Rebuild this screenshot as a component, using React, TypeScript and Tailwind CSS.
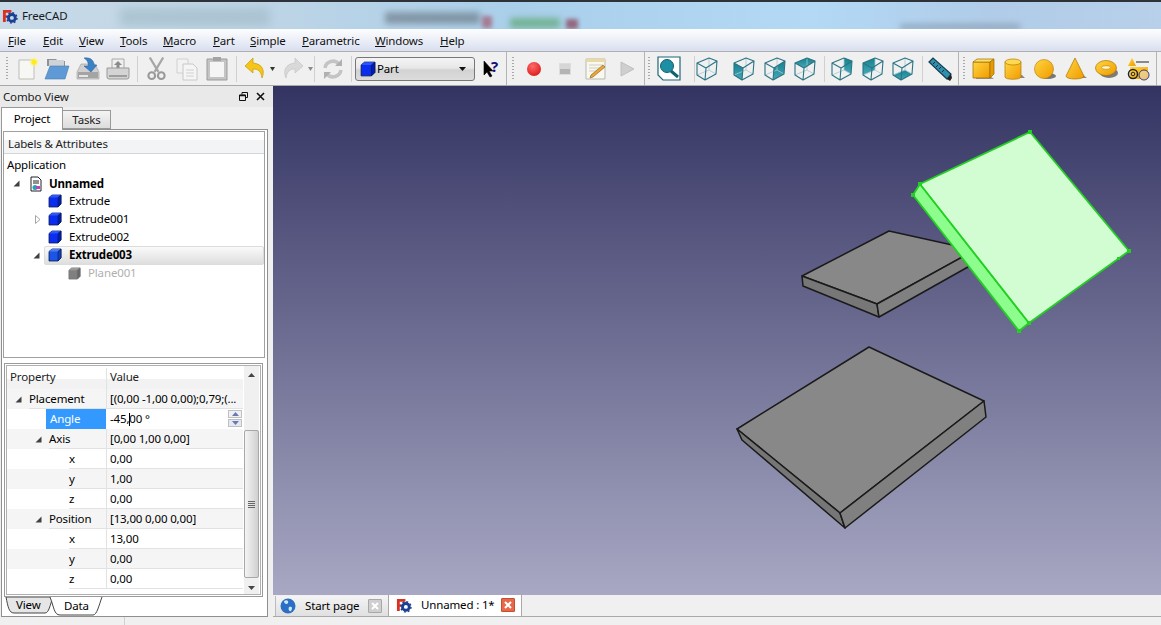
import type { ReactNode } from 'react'
import clsx from 'clsx'

const FONT = "font-['Noto_Sans',sans-serif] text-[11.5px] tracking-[-0.15px] whitespace-nowrap"

function Logo() {
  return (
    <svg width="16" height="16" viewBox="0 0 17 17" className="shrink-0">
      <path d="M1 2h9v3H4v3h3v2H4v5H1z" fill="#d9301f" />
      <circle cx="10.5" cy="10.5" r="3.6" fill="none" stroke="#1c3f94" strokeWidth="3" />
      <circle cx="10.5" cy="10.5" r="5.4" fill="none" stroke="#1c3f94" strokeWidth="1.6" strokeDasharray="2 2.2" />
    </svg>
  )
}

function Cube({ size = 14, front = '#0a2df0', top = '#2a55ff', side = '#001fb0', line = '#0a1a50' }) {
  return (
    <svg width={size} height={size} viewBox="0 0 14 14" className="shrink-0">
      <path d="M1 3.5 4 1h9v9l-3 3H1z" fill={front} stroke={line} strokeWidth="0.8" />
      <path d="M1 3.5 4 1h9l-3 2.5z" fill={top} />
      <path d="M10 3.5 13 1v9l-3 3z" fill={side} stroke={line} strokeWidth="0.6" />
    </svg>
  )
}

function ViewCube({ face }: { face?: string }) {
  return (
    <svg width="22" height="24" viewBox="0 0 22 24">
      <defs>
        <linearGradient id="teal" x1="0" y1="0" x2="0" y2="1">
          <stop offset="0" stopColor="#17808f" />
          <stop offset="1" stopColor="#44a8b8" />
        </linearGradient>
      </defs>
      {face && <polygon points={face} fill="url(#teal)" />}
      <g fill="none" stroke="#a4c8ce" strokeWidth="0.8">
        <path d="M13 1v12M1 18l12-5 7 4" />
      </g>
      <g fill="none" stroke="#2a7484" strokeWidth="1.1" strokeLinejoin="round">
        <path d="M1 6 13 1l8 3-1 13-11 6-8-5zM1 6l9 5 11-7M10 11 9 23" />
      </g>
    </svg>
  )
}

function Solid({ children }: { children: ReactNode }) {
  return (
    <svg width="24" height="24" viewBox="0 0 24 24">
      <defs>
        <linearGradient id="gold" x1="0" y1="0" x2="1" y2="1">
          <stop offset="0" stopColor="#ffd640" />
          <stop offset="1" stopColor="#f09a00" />
        </linearGradient>
      </defs>
      {children}
    </svg>
  )
}

function Slot({ children, narrow, className }: { children?: ReactNode; narrow?: boolean; className?: string }) {
  return (
    <div className={clsx('flex h-6 shrink-0 items-center justify-center', narrow ? 'w-[22px]' : 'w-[30px]', className)}>
      {children}
    </div>
  )
}

function Sep({ className }: { className: string }) {
  return <div className={clsx('h-[26px] w-px shrink-0 bg-[#d0d0d0]', className)} />
}

function Bound({ className }: { className: string }) {
  return <div className={clsx('h-full w-px shrink-0 bg-[#b4b4b4]', className)} />
}

function Grip({ className }: { className: string }) {
  return (
    <div className={clsx('h-[24px] w-[2px] shrink-0 bg-[repeating-linear-gradient(180deg,#a8a8a8_0,#a8a8a8_1px,transparent_1px,transparent_3px)]', className)} />
  )
}

function DropArrow({ color }: { color: string }) {
  return (
    <svg width="5" height="4" viewBox="0 0 5 4" className="shrink-0">
      <path d="M0 0h5L2.5 4z" fill={color} />
    </svg>
  )
}

function Toolbar() {
  return (
    <div className="flex h-[34px] items-center border-b border-[#a9a9a9] bg-[#f0f0f0]">
      <Grip className="ml-[6px]" />
      <Slot className="ml-[4px]">
        <svg width="24" height="24" viewBox="0 0 24 24">
          <path d="M4 3h15v19H4z" fill="#f7f7f4" stroke="#bdbdb8" />
          <circle cx="19" cy="5" r="4.5" fill="#fff27a" opacity=".55" />
          <circle cx="19" cy="5" r="2.6" fill="#ffe91f" />
        </svg>
      </Slot>
      <Slot>
        <svg width="26" height="24" viewBox="0 0 26 24">
          <path d="M3 2h9l2 2h7v5H3z" fill="#8d9299" />
          <path d="M5 3h15v6H5z" fill="#cfd3d8" />
          <path d="M6 9h19l-4 13H1z" fill="#5f9ad6" stroke="#4a7cae" strokeWidth=".6" />
        </svg>
      </Slot>
      <Slot className="ml-px">
        <svg width="24" height="24" viewBox="0 0 24 24">
          <path d="M1 15 5 7h14l4 8v7H1z" fill="#cfcfcf" stroke="#9a9a9a" strokeWidth=".6" />
          <path d="M2 15h20v6H2z" fill="#a4a4a4" />
          <path d="M3 18h9v2H3z" fill="#e6e6e6" />
          <path d="M8 1c7-1 10 3 10 7h3l-6 7-7-6h4c1-3-1-6-4-8z" fill="#3a82c8" stroke="#2a5f98" strokeWidth=".5" />
        </svg>
      </Slot>
      <Slot>
        <svg width="24" height="22" viewBox="0 0 24 22">
          <path d="M6 1h12v10H6z" fill="#efefef" stroke="#aaa" />
          <path d="M12 3l4 4h-2.500v3h-3V7H8z" fill="#8a8a8a" />
          <path d="M1 10h22v9a2 2 0 0 1-2 2H3a2 2 0 0 1-2-2z" fill="#d4d4d4" stroke="#999" />
          <path d="M3 17h18v2H3z" fill="#9e9e9e" />
        </svg>
      </Slot>
      <Sep className="ml-[4px]" />
      <Slot className="ml-[3px]">
        <svg width="21" height="25" viewBox="0 0 22 25" fill="none" stroke="#a6a6a6">
          <path d="M4 1l9 15M18 1L9 16" strokeWidth="2.400" />
          <circle cx="6" cy="20" r="3.500" stroke="#999" strokeWidth="2.200" />
          <circle cx="16" cy="20" r="3.500" stroke="#999" strokeWidth="2.200" />
        </svg>
      </Slot>
      <Slot className="ml-px">
        <svg width="24" height="24" viewBox="0 0 24 24">
          <path d="M2 2h11v14H2z" fill="#f2f2f2" stroke="#d0d0d0" />
          <path d="M8 7h10l4 4v12H8z" fill="#f5f5f5" stroke="#c8c8c8" />
          <path d="M11 13h8M11 16h8M11 19h8" stroke="#d0d0d0" />
        </svg>
      </Slot>
      <Slot>
        <svg width="22" height="25" viewBox="0 0 22 25">
          <path d="M1 3h20v21H1z" fill="#c4c4c4" stroke="#9c9c9c" />
          <path d="M4 6h14v15H4z" fill="#f5f5f5" />
          <path d="M7 1h8v4H7z" fill="#a4a4a4" />
        </svg>
      </Slot>
      <Sep className="ml-[4px]" />
      <Slot className="ml-[3px]">
        <svg width="22" height="24" viewBox="0 0 22 24">
          <path d="M9 1 1 9l8 7v-4c5 0 8 2 9 9 3-7 1-14-9-15z" fill="#f5c518" stroke="#c99a0a" strokeWidth=".7" />
        </svg>
      </Slot>
      <div className="flex w-[5px] shrink-0 justify-center">
        <DropArrow color="#333" />
      </div>
      <Slot className="ml-[3px]">
        <svg width="22" height="24" viewBox="0 0 22 24">
          <path d="M13 1l8 8-8 7v-4c-5 0-8 2-9 9-3-7-1-14 9-15z" fill="#d9d9d9" stroke="#c4c4c4" strokeWidth=".7" />
        </svg>
      </Slot>
      <div className="flex w-[5px] shrink-0 justify-center">
        <DropArrow color="#8a8a8a" />
      </div>
      <Sep className="ml-px" />
      <Slot className="ml-[3px]">
        <svg width="22" height="22" viewBox="0 0 22 22" fill="none" stroke="#c4c4c4" strokeWidth="3.500">
          <path d="M3 10a8 8 0 0 1 14-4" />
          <path d="M19 12a8 8 0 0 1-14 4" />
          <path d="M20 1v7h-7zM2 21v-7h7z" fill="#b0b0b0" stroke="none" />
        </svg>
      </Slot>
      <Sep className="ml-[3px]" />
      <div className="ml-[3px] flex h-[24px] w-[120px] shrink-0 items-center rounded-[3px] border border-[#777] bg-[linear-gradient(180deg,#f4f4f4_0,#e8e8e8_45%,#d2d2d2_55%,#dcdcdc_100%)] pl-1 text-black">
        <Cube size={16} />
        <span className="ml-px">Part</span>
        <span className="ml-auto mr-[8px] flex">
          <svg width="7" height="4" viewBox="0 0 7 4">
            <path d="M0 0h7L3.500 4z" fill="#111" />
          </svg>
        </span>
      </div>
      <Slot className="relative ml-px">
        <svg width="12" height="18" viewBox="0 0 12 18" className="absolute left-[7px] top-[3px]">
          <path d="M1 1v14l3-3 3 5 2-1-3-5h4z" fill="#000" stroke="#000" strokeWidth=".6" />
        </svg>
        <span className="absolute left-[15px] top-[-2px] text-[15px] font-bold text-[#10107a]">?</span>
      </Slot>
      <Bound className="ml-0" />
      <Grip className="ml-[5px]" />
      <Slot className="ml-[5px]">
        <svg width="16" height="16" viewBox="0 0 16 16">
          <defs>
            <radialGradient id="rec" cx=".4" cy=".3" r=".8">
              <stop offset="0" stopColor="#ff6a6a" />
              <stop offset="1" stopColor="#d81414" />
            </radialGradient>
          </defs>
          <circle cx="8" cy="8" r="7" fill="url(#rec)" />
        </svg>
      </Slot>
      <Slot className="ml-px">
        <div className="h-[12px] w-[12px] border border-[#ddd] bg-[linear-gradient(180deg,#d6d6d6_50%,#b4b4b4_50%)]" />
      </Slot>
      <Slot className="ml-px">
        <svg width="24" height="24" viewBox="0 0 24 24">
          <path d="M2 2h19v20H2z" fill="#f8f7f0" stroke="#b8b8b0" />
          <path d="M2 2h19v3H2z" fill="#ead9a0" />
          <path d="M5 8h14M5 11h14M5 14h9" stroke="#cfcfc4" />
          <path d="M7 18 19 8l2 2-12 10-3 1z" fill="#e8a838" stroke="#8a5a10" strokeWidth=".6" />
        </svg>
      </Slot>
      <Slot className="ml-px">
        <svg width="15" height="16" viewBox="0 0 15 16">
          <path d="M1 1l13 7-13 7z" fill="#cfcfcf" stroke="#c0c0c0" />
        </svg>
      </Slot>
      <Bound className="ml-[2px]" />
      <Grip className="ml-[3px]" />
      <Slot className="ml-[4px]">
        <svg width="24" height="25" viewBox="0 0 24 25">
          <path d="M1 1h22v23H6l-5-5z" fill="#fff" stroke="#1f6676" strokeWidth="1.200" />
          <circle cx="10" cy="10" r="6.500" fill="#1d8fa5" stroke="#13606f" />
          <path d="m14 15 7 6" stroke="#13606f" strokeWidth="3" />
        </svg>
      </Slot>
      <Sep className="ml-[10px]" />
      <Slot narrow className="ml-px"><ViewCube /></Slot>
      <Slot narrow className="ml-[15px]"><ViewCube face="1,6 10,11 9,23 1,18" /></Slot>
      <Slot narrow className="ml-[9px]"><ViewCube face="10,11 21,4 20,17 9,23" /></Slot>
      <Slot narrow className="ml-[8px]"><ViewCube face="1,6 13,1 21,4 10,11" /></Slot>
      <Sep className="ml-[8px]" />
      <Slot narrow className="ml-[6px]"><ViewCube face="13,1 21,4 20,17 13,13" /></Slot>
      <Slot narrow className="ml-[9px]"><ViewCube face="1,6 13,1 13,13 1,18" /></Slot>
      <Slot narrow className="ml-[8px]"><ViewCube face="1,18 13,13 20,17 9,23" /></Slot>
      <Sep className="ml-[8px]" />
      <Slot className="ml-[2px]">
        <svg width="24" height="24" viewBox="0 0 24 24">
          <path d="M1 5 5 1l18 16-4 5z" fill="#2f8fb0" stroke="#173f4c" strokeWidth="1.200" />
          <path d="M5 7l2-2M8 10l2-2M11 12l2-2M14 15l2-2" stroke="#0d2a34" />
          <path d="M19 22l4-5 1 4-2 3z" fill="#222" />
        </svg>
      </Slot>
      <Bound className="ml-[3px]" />
      <Grip className="ml-[4px]" />
      <Slot className="ml-[3px]">
        <Solid>
          <path d="M5 22h18l-4-3H5z" fill="#999" />
          <path d="M2 5h17v16H2z" fill="url(#gold)" stroke="#9a6a00" strokeWidth=".7" />
          <path d="M2 5l4-3h17l-4 3z" fill="#ffdf66" stroke="#9a6a00" strokeWidth=".7" />
          <path d="M19 5l4-3v15l-4 4z" fill="#e89a00" stroke="#9a6a00" strokeWidth=".7" />
        </Solid>
      </Slot>
      <Slot className="ml-px">
        <Solid>
          <path d="M10 21h13l-3-3H10z" fill="#888" />
          <path d="M3 5v15c0 3 16 3 16 0V5z" fill="url(#gold)" stroke="#b07a00" strokeWidth=".7" />
          <ellipse cx="11" cy="5" rx="8" ry="3" fill="#ffd94f" stroke="#b07a00" strokeWidth=".7" />
        </Solid>
      </Slot>
      <Slot className="ml-px">
        <Solid>
          <ellipse cx="15" cy="19" rx="8" ry="3" fill="#777" />
          <circle cx="11" cy="12" r="9.500" fill="url(#gold)" stroke="#b07a00" strokeWidth=".6" />
        </Solid>
      </Slot>
      <Slot className="ml-px">
        <Solid>
          <path d="M14 21h9l-4-3h-5z" fill="#888" />
          <path d="M11 1 2 19c0 4 18 4 18 0z" fill="url(#gold)" stroke="#a87400" strokeWidth=".7" />
        </Solid>
      </Slot>
      <Slot className="ml-px">
        <Solid>
          <ellipse cx="14" cy="16" rx="9" ry="5" fill="#7a7a7a" />
          <ellipse cx="11" cy="11" rx="10.500" ry="7.500" fill="url(#gold)" stroke="#a87400" strokeWidth=".7" />
          <ellipse cx="11" cy="10.500" rx="4.500" ry="1.800" fill="#fff3c4" stroke="#a87400" strokeWidth=".5" />
        </Solid>
      </Slot>
      <Slot className="ml-[2px]">
        <Solid>
          <path d="M5 1 1 9h8z" fill="url(#gold)" />
          <path d="M9 5h13" stroke="#222" />
          <path d="M3 10h18v12H3z" fill="url(#gold)" />
          <circle cx="6" cy="17" r="4.500" fill="none" stroke="#222" strokeWidth="1.500" />
          <circle cx="6" cy="17" r="1.800" fill="none" stroke="#222" />
          <circle cx="17" cy="18" r="5" fill="#e8e8f0" fillOpacity=".5" stroke="#3a3a70" />
        </Solid>
      </Slot>
      <Bound className="ml-[2px]" />
    </div>
  )
}

const MENU = [
  { first: 'F', rest: 'ile', w: 'w-[35px]' },
  { first: 'E', rest: 'dit', w: 'w-[36px]' },
  { first: 'V', rest: 'iew', w: 'w-[41px]' },
  { first: 'T', rest: 'ools', w: 'w-[43px]' },
  { first: 'M', rest: 'acro', w: 'w-[50px]' },
  { first: 'P', rest: 'art', w: 'w-[37px]' },
  { first: 'S', rest: 'imple', w: 'w-[52px]' },
  { first: 'P', rest: 'arametric', w: 'w-[73px]' },
  { first: 'W', rest: 'indows', w: 'w-[65px]' },
  { first: 'H', rest: 'elp', w: 'w-[40px]' },
]

function Caret({ open }: { open: boolean }) {
  return open ? (
    <svg width="7" height="7" viewBox="0 0 7 7" className="shrink-0">
      <path d="M6.500 0.500v6h-6z" fill="#404040" />
    </svg>
  ) : (
    <svg width="6" height="9" viewBox="0 0 6 9" className="shrink-0">
      <path d="M.5.500 5 4.500.5 8.500z" fill="#fff" stroke="#a6a6a6" />
    </svg>
  )
}

function TreeRow({ label, caret }: { label: string; caret?: ReactNode }) {
  return (
    <div className="flex h-[18px] items-center">
      <span className="ml-[28px] flex w-[13px]">{caret}</span>
      <Cube />
      <span className="ml-[7px]">{label}</span>
    </div>
  )
}

function Tree() {
  return (
    <div className="h-[227px] w-[262px] shrink-0 border border-[#a0a0a0] bg-white">
      <div className="flex h-[22px] items-center border-b border-[#d5d5d5] bg-[linear-gradient(180deg,#ffffff_40%,#f2f4f6_40%)] pl-[4px] pt-[3px] text-[#222]">
        Labels &amp; Attributes
      </div>
      <div className="pl-[3px] pt-[2px] leading-[18px] text-black">
        <div className="h-[18px]">Application</div>
        <div className="flex h-[18px] items-center pt-px">
          <span className="ml-[6px] flex w-[17px]"><Caret open /></span>
          <svg width="12" height="16" viewBox="0 0 12 16" className="shrink-0">
            <path d="M1 1h7l3 3v11H1z" fill="#fff" stroke="#222" />
            <path d="M3 5h6M3 7h6" stroke="#222" />
            <circle cx="5" cy="11.500" r="2.500" fill="#28a0b8" />
            <rect x="6" y="10" width="4" height="3" fill="#c040c0" />
          </svg>
          <span className="ml-[7px] font-bold">Unnamed</span>
        </div>
        <TreeRow label="Extrude" />
        <TreeRow label="Extrude001" caret={<Caret open={false} />} />
        <TreeRow label="Extrude002" />
        <div className="flex h-[18px] items-center">
          <span className="ml-[26px] flex w-[10px]"><Caret open /></span>
          <div className="ml-px flex h-[19px] w-[223px] items-center rounded-[2px] border border-[#dcdcdc] bg-[linear-gradient(180deg,#fafafa,#dedede)] pl-[3px]">
            <Cube front="#1a55e8" top="#4a7cf5" side="#1040c0" />
            <span className="ml-[7px] font-bold">Extrude003</span>
          </div>
        </div>
        <div className="flex h-[18px] items-center pl-[61px]">
          <Cube size={13} front="#808080" top="#9a9a9a" side="#666" line="#707070" />
          <span className="ml-[7px] text-[#b0b0b0]">Plane001</span>
        </div>
      </div>
    </div>
  )
}

const ROWS: { label: string; value: string; indent: 'a' | 'b' | 'c'; caret?: boolean; grey?: boolean }[] = [
  { label: 'Placement', value: '[(0,00 -1,00 0,00);0,79;(...', indent: 'a', caret: true, grey: true },
  { label: 'Axis', value: '[0,00 1,00 0,00]', indent: 'b', caret: true, grey: true },
  { label: 'x', value: '0,00', indent: 'c' },
  { label: 'y', value: '1,00', indent: 'c', grey: true },
  { label: 'z', value: '0,00', indent: 'c' },
  { label: 'Position', value: '[13,00 0,00 0,00]', indent: 'b', caret: true, grey: true },
  { label: 'x', value: '13,00', indent: 'c' },
  { label: 'y', value: '0,00', indent: 'c', grey: true },
  { label: 'z', value: '0,00', indent: 'c' },
]

function PropRow({ label, value, indent, caret, grey }: (typeof ROWS)[number]) {
  return (
    <div className={clsx('flex h-5 text-black', grey ? 'bg-[#f5f5f5]' : 'bg-white')}>
      <div className="flex w-[99px] shrink-0 items-center">
        <span className={clsx('flex shrink-0 justify-start', indent === 'a' ? 'w-[22px] pl-[8px]' : indent === 'b' ? 'w-[42px] pl-[28px]' : 'w-[62px]')}>
          {caret && <Caret open />}
        </span>
        <span className="h-full flex-1 border-b border-[#e2e2e2] leading-[19px]">{label}</span>
      </div>
      <div className="h-full min-w-0 flex-1 overflow-hidden border-b border-l border-[#e2e2e2] pl-[3px] leading-[19px]">{value}</div>
    </div>
  )
}

function PropertyPanel() {
  return (
    <div className="ml-px mt-[5px] h-[234px] w-[259px] shrink-0 border border-[#9a9a9a] p-px">
      <div className="flex h-[230px] border border-[#b0b0b0] bg-white">
        <div className="w-[236px] shrink-0">
          <div className="flex h-[23px] pt-[2px] text-[#222]">
            <div className="w-[99px] bg-[linear-gradient(180deg,#fff_50%,#f2f2f2_50%)] pl-[3px]">Property</div>
            <div className="flex-1 border-l border-[#e2e2e2] bg-[linear-gradient(180deg,#fff_50%,#f2f2f2_50%)] pl-[3px]">Value</div>
          </div>
          <PropRow {...ROWS[0]} />
          <div className="flex h-5 bg-white">
            <div className="ml-[39px] w-[60px] bg-[#3399ff] pl-[4px] leading-[19px] text-white">Angle</div>
            <div className="relative flex-1 pl-[4px] leading-[19px] text-black">
              -45,<span className="-mr-px inline-block h-[13px] w-px bg-black align-middle" />00 °
              <div className="absolute right-[1px] top-[1px] flex w-[14px] flex-col gap-px">
                <span className="flex h-[8px] items-center justify-center border border-[#c0c0c0] bg-[#eef0f6]">
                  <svg width="7" height="4" viewBox="0 0 7 4"><path d="M3.500 0 7 4H0z" fill="#6a7ab0" /></svg>
                </span>
                <span className="flex h-[8px] items-center justify-center border border-[#c0c0c0] bg-[#e4e8f2]">
                  <svg width="7" height="4" viewBox="0 0 7 4"><path d="M0 0h7L3.500 4z" fill="#6a7ab0" /></svg>
                </span>
              </div>
            </div>
          </div>
          {ROWS.slice(1).map((row, i) => (
            <PropRow key={i} {...row} />
          ))}
        </div>
        <div className="ml-px flex w-[15px] shrink-0 flex-col items-center bg-[#f0f0f0]">
          <svg width="7" height="4" viewBox="0 0 7 4" className="mt-[7px] shrink-0"><path d="M3.500 0 7 4H0z" fill="#444" /></svg>
          <div className="mt-[53px] flex h-[148px] w-[15px] shrink-0 items-center justify-center rounded-[2px] border border-[#a8a8a8] bg-[linear-gradient(90deg,#f4f4f4,#d0d0d0)]">
            <div className="h-[7px] w-[7px] bg-[repeating-linear-gradient(180deg,#666_0,#666_1px,transparent_1px,transparent_2px)]" />
          </div>
          <svg width="7" height="4" viewBox="0 0 7 4" className="mt-[8px] shrink-0"><path d="M0 0h7L3.500 4z" fill="#444" /></svg>
        </div>
      </div>
    </div>
  )
}

function BottomTabs() {
  return (
    <div className="relative h-[20px] text-black">
      <svg width="110" height="20" viewBox="0 0 110 20" className="absolute left-0 top-0">
        <path d="M3 0c2 10 3 16 8 16h31c4 0 5-8 8-16z" fill="#e6e6e6" stroke="#444" strokeWidth="1" />
        <path d="M47 0c4 10 4 18 10 18h33c4 0 6-10 9-18" fill="#fff" stroke="#444" strokeWidth="1" />
      </svg>
      <span className="absolute left-[13px] top-[-1px]">View</span>
      <span className="absolute left-[61px] top-0">Data</span>
    </div>
  )
}

function Sidebar() {
  return (
    <aside className="flex w-[273px] shrink-0 flex-col bg-[#f0f0f0]">
      <div className="flex h-[21px] shrink-0 items-center justify-between bg-[#e9e9e9] pl-[3px] pr-[8px] text-[#222]">
        <span>Combo View</span>
        <span className="flex items-center gap-[8px]">
          <svg width="9" height="9" viewBox="0 0 9 9" fill="none" stroke="#111">
            <path d="M3 2.500V.500h5.500v5H6.500" />
            <path d="M.5 3h6v5.500h-6z" />
            <path d="M.5 3.500h6" strokeWidth="1.500" />
          </svg>
          <svg width="9" height="9" viewBox="0 0 9 9" stroke="#111" strokeWidth="1.600">
            <path d="m1 1 7 7M8 1 1 8" />
          </svg>
        </span>
      </div>
      <div className="flex h-[22px] shrink-0 items-end pl-px">
        <div className="relative z-10 -mb-px flex h-[23px] w-[62px] items-center justify-center border border-b-0 border-[#999] bg-white text-black">
          Project
        </div>
        <div className="flex h-[19px] w-[48px] items-center justify-center border border-l-0 border-[#999] bg-[linear-gradient(180deg,#f4f4f4,#dcdcdc)] pt-px text-[#222]">
          Tasks
        </div>
      </div>
      <div className="ml-px flex h-[488px] w-[267px] shrink-0 flex-col border border-[#8f8f8f] bg-white pl-px pr-px pt-px">
        <Tree />
        <PropertyPanel />
        <BottomTabs />
      </div>
      <div className="ml-[124px] min-h-0 w-px flex-1 bg-[#d0d0d0]" />
    </aside>
  )
}

function Scene() {
  return (
    <svg viewBox="273 86 888 509" className="absolute inset-0 h-full w-full">
      <g stroke="#1a1a1a" strokeWidth="1.500" strokeLinejoin="round">
        <path d="M889 231 802 276 877 304 975 250z" fill="#888888" />
        <path d="M802 276 803 286 879 317 877 304z" fill="#777777" />
        <path d="M877 304 879 317 975 263 975 250z" fill="#808080" />
        <path d="M869 347 737 429 840 513 984 401z" fill="#888888" />
        <path d="M737 429 742 440 845 528 840 513z" fill="#767676" />
        <path d="M840 513 845 528 986 417 984 401z" fill="#808080" />
      </g>
      <g stroke="#22d022" strokeWidth="1.800" strokeLinejoin="round">
        <path d="M920 184 913 195 1019 331 1029 323z" fill="#8dfd8d" />
        <path d="M1030 132 920 184 1029 323 1129 251z" fill="#d2fdd2" />
      </g>
      <g fill="#22d022">
        <rect x="1028" y="130" width="4" height="4" />
        <rect x="918" y="182" width="4" height="4" />
        <rect x="911" y="193" width="4" height="4" />
        <rect x="1127" y="249" width="4" height="4" />
        <rect x="1117" y="257" width="3" height="3" />
        <rect x="1027" y="321" width="4" height="4" />
        <rect x="1017" y="329" width="4" height="4" />
      </g>
    </svg>
  )
}

export default function App() {
  return (
    <div className={clsx('flex h-[625px] w-[1161px] flex-col overflow-hidden bg-[#f0f0f0]', FONT)}>
      <div className="relative flex h-[29px] shrink-0 items-center overflow-hidden border-t-2 border-[#2c3238] bg-[linear-gradient(90deg,#c8dae8_0,#bcd4e6_25%,#a9cfea_45%,#b3d9f5_70%,#b0cce8_85%,#b8d0ea_100%)] pl-[2px]">
        <div className="absolute left-[120px] top-[6px] h-[18px] w-[150px] bg-[#9fb8c4] opacity-60 blur-[5px]" />
        <div className="absolute left-[385px] top-[10px] h-[12px] w-[95px] bg-[#6f7f8c] opacity-70 blur-[3px]" />
        <div className="absolute left-[482px] top-[14px] h-[12px] w-[10px] bg-[#a05a70] opacity-70 blur-[2px]" />
        <div className="absolute left-[510px] top-[16px] h-[10px] w-[50px] bg-[#4fa05a] opacity-60 blur-[3px]" />
        <div className="absolute left-[566px] top-[17px] h-[10px] w-[12px] bg-[#8a3a50] opacity-70 blur-[2px]" />
        <div className="absolute left-[900px] top-[22px] h-[6px] w-[120px] bg-[#708090] opacity-50 blur-[3px]" />
        <div className="relative flex items-center">
          <Logo />
          <span className="ml-[4px] text-[#1a1a1a]">FreeCAD</span>
        </div>
      </div>
      <div className="flex h-[23px] shrink-0 items-center border-b border-[#b0b0b0] bg-[linear-gradient(180deg,#fdfdfe_0,#f3f5fa_30%,#d9dff0_100%)] pl-[8px] pt-px text-[#111]">
        {MENU.map((m) => (
          <div key={m.first + m.rest} className={clsx('shrink-0', m.w)}>
            <span className="underline">{m.first}</span>
            {m.rest}
          </div>
        ))}
      </div>
      <Toolbar />
      <div className="flex min-h-0 flex-1">
        <Sidebar />
        <main className="flex min-w-0 flex-1 flex-col">
          <div className="relative h-[509px] shrink-0 bg-[linear-gradient(180deg,#343463_0,#a8a8c4_100%)]">
            <Scene />
          </div>
          <div className="flex h-[22px] shrink-0 items-start border-b border-[#a9a9a9] pl-[2px] text-black">
            <div className="mt-px flex h-[20px] w-[113px] items-center border-l border-[#bbb] bg-[linear-gradient(180deg,#f4f4f4,#e0e0e0)] pl-[4px]">
              <svg width="16" height="16" viewBox="0 0 16 16" className="shrink-0">
                <circle cx="8" cy="8" r="7.500" fill="#2a6fc4" />
                <path d="M4 3c3-2 5 0 4 2S4 6 4 3zM9 9c3-1 4 1 2 4-2 1-3-2-2-4z" fill="#cfe6ff" />
              </svg>
              <span className="ml-[9px]">Start page</span>
              <span className="ml-auto mr-[6px] flex h-[14px] w-[14px] items-center justify-center rounded-[1px] border border-[#a8a8a8] bg-[#cfcfcf]">
                <svg width="8" height="8" viewBox="0 0 8 8" stroke="#fff" strokeWidth="2"><path d="m1 1 6 6M7 1 1 7" /></svg>
              </span>
            </div>
            <div className="-mt-[2px] flex h-[24px] w-[134px] items-center border border-t-0 border-[#a9a9a9] bg-white pl-[7px]">
              <Logo />
              <span className="ml-[9px]">Unnamed : 1*</span>
              <span className="ml-auto mr-[6px] flex h-[14px] w-[14px] items-center justify-center rounded-[1px] border border-[#c05030] bg-[#e8694a]">
                <svg width="8" height="8" viewBox="0 0 8 8" stroke="#fff" strokeWidth="2"><path d="m1 1 6 6M7 1 1 7" /></svg>
              </span>
            </div>
          </div>
          <div className="flex-1 bg-[#f0f0f0]" />
        </main>
      </div>
    </div>
  )
}
